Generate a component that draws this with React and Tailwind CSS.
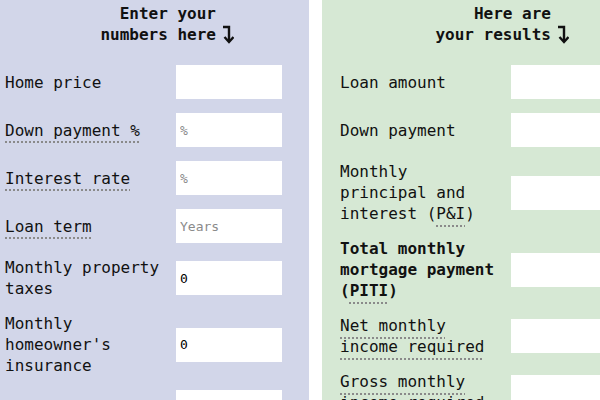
import React from "react";

const dot =
  "underline decoration-dotted decoration-[#8a8a8a] decoration-2 underline-offset-[6px]";

function Arrow() {
  return (
    <svg
      className="absolute left-full top-0 ml-[7px]"
      width="11"
      height="19"
      viewBox="0 0 11 19"
      fill="none"
      stroke="#111"
      strokeWidth="2.4"
    >
      <path d="M0 2 H6 V16" />
      <path d="M1.5 12 L6 17 L10.5 12" />
    </svg>
  );
}

function Header({ l1, l2 }) {
  return (
    <div className="w-[211px] text-right font-bold leading-[21px] pt-[3px] mb-[20px]">
      <div>{l1}</div>
      <div>
        <span className="relative">
          {l2}
          <Arrow />
        </span>
      </div>
    </div>
  );
}

function Row({ label, input }) {
  return (
    <div className="grid grid-cols-[160px_106px] gap-x-[11px] items-center">
      <div className="leading-[21px]">{label}</div>
      {input}
    </div>
  );
}

function Box({ placeholder, value }) {
  return (
    <input
      readOnly
      placeholder={placeholder}
      defaultValue={value}
      className="h-[34px] w-[106px] bg-white pl-[4px] text-[13px] text-black placeholder:text-[#8a8a8a] outline-none font-['DejaVu_Sans_Mono',monospace]"
    />
  );
}

export default function App() {
  return (
    <div className="w-[600px] h-[400px] overflow-hidden flex bg-white text-[16px] text-[#111] font-['DejaVu_Sans_Mono',monospace]">
      <div className="w-[309px] shrink-0 bg-[#d2d6e9] pl-[5px]">
        <Header l1="Enter your" l2="numbers here" />
        <div className="flex flex-col gap-y-[14px]">
          <Row label="Home price" input={<Box />} />
          <Row label={<span className={dot}>Down payment %</span>} input={<Box placeholder="%" />} />
          <Row label={<span className={dot}>Interest rate</span>} input={<Box placeholder="%" />} />
          <Row label={<span className={dot}>Loan term</span>} input={<Box placeholder="Years" />} />
          <Row label="Monthly property taxes" input={<Box value="0" />} />
          <Row label="Monthly homeowner's insurance" input={<Box value="0" />} />
          <Row label="HOA fees" input={<Box value="0" />} />
        </div>
      </div>
      <div className="w-[13px] shrink-0 bg-white" />
      <div className="flex-1 min-w-0 bg-[#d6e8d4] pl-[18px] overflow-hidden">
        <Header l1="Here are" l2="your results" />
        <div className="flex flex-col gap-y-[14px]">
          <Row label="Loan amount" input={<Box />} />
          <Row label="Down payment" input={<Box />} />
          <Row
            label={
              <>
                Monthly principal and interest (<span className={dot}>P&amp;I</span>)
              </>
            }
            input={<Box />}
          />
          <Row
            label={
              <span className="font-bold">
                Total monthly mortgage payment (<span className={dot}>PITI</span>)
              </span>
            }
            input={<Box />}
          />
          <Row label={<span className={dot}>Net monthly income required</span>} input={<Box />} />
          <Row label={<span className={dot}>Gross monthly income required</span>} input={<Box />} />
        </div>
      </div>
    </div>
  );
}
